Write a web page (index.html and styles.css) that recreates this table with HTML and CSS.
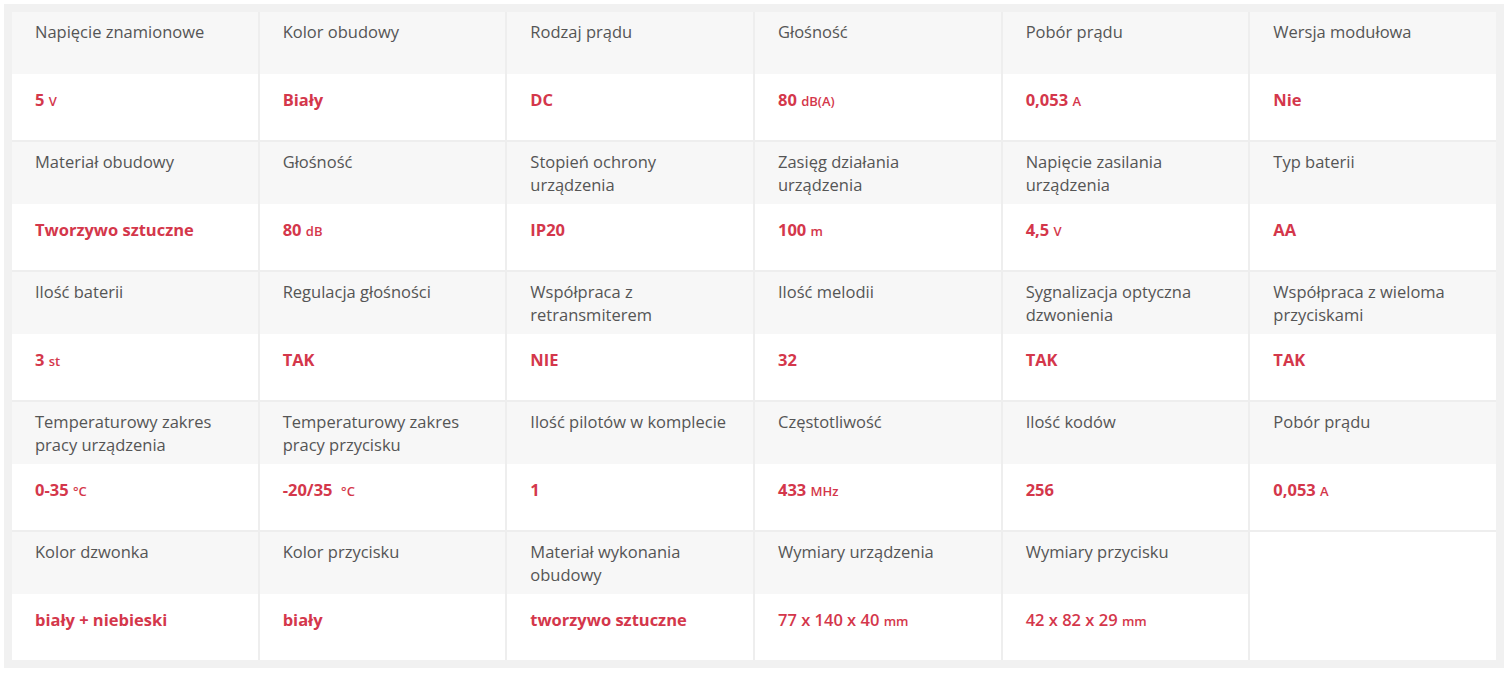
FILE: index.html
```html
<!DOCTYPE html>
<html lang="pl">
<head>
<meta charset="utf-8">
<title>Parametry</title>
<link rel="stylesheet" href="styles.css">
</head>
<body>
<div class="frame">
  <div class="grid">
    <div class="cell"><div class="label">Napięcie znamionowe</div><div class="value">5 <span class="unit">V</span></div></div>
    <div class="cell"><div class="label">Kolor obudowy</div><div class="value">Biały</div></div>
    <div class="cell"><div class="label">Rodzaj prądu</div><div class="value">DC</div></div>
    <div class="cell"><div class="label">Głośność</div><div class="value">80 <span class="unit">dB(A)</span></div></div>
    <div class="cell"><div class="label">Pobór prądu</div><div class="value">0,053 <span class="unit">A</span></div></div>
    <div class="cell"><div class="label">Wersja modułowa</div><div class="value">Nie</div></div>

    <div class="cell"><div class="label">Materiał obudowy</div><div class="value">Tworzywo sztuczne</div></div>
    <div class="cell"><div class="label">Głośność</div><div class="value">80 <span class="unit">dB</span></div></div>
    <div class="cell"><div class="label">Stopień ochrony urządzenia</div><div class="value">IP20</div></div>
    <div class="cell"><div class="label">Zasięg działania urządzenia</div><div class="value">100 <span class="unit">m</span></div></div>
    <div class="cell"><div class="label">Napięcie zasilania urządzenia</div><div class="value">4,5 <span class="unit">V</span></div></div>
    <div class="cell"><div class="label">Typ baterii</div><div class="value">AA</div></div>

    <div class="cell"><div class="label">Ilość baterii</div><div class="value">3 <span class="unit">st</span></div></div>
    <div class="cell"><div class="label">Regulacja głośności</div><div class="value">TAK</div></div>
    <div class="cell"><div class="label">Współpraca z retransmiterem</div><div class="value">NIE</div></div>
    <div class="cell"><div class="label">Ilość melodii</div><div class="value">32</div></div>
    <div class="cell"><div class="label">Sygnalizacja optyczna dzwonienia</div><div class="value">TAK</div></div>
    <div class="cell"><div class="label">Współpraca z wieloma przyciskami</div><div class="value">TAK</div></div>

    <div class="cell"><div class="label">Temperaturowy zakres pracy urządzenia</div><div class="value">0-35 <span class="unit">°C</span></div></div>
    <div class="cell"><div class="label">Temperaturowy zakres pracy przycisku</div><div class="value">-20/35 &nbsp;<span class="unit">°C</span></div></div>
    <div class="cell"><div class="label">Ilość pilotów w komplecie</div><div class="value">1</div></div>
    <div class="cell"><div class="label">Częstotliwość</div><div class="value">433 <span class="unit">MHz</span></div></div>
    <div class="cell"><div class="label">Ilość kodów</div><div class="value">256</div></div>
    <div class="cell"><div class="label">Pobór prądu</div><div class="value">0,053 <span class="unit">A</span></div></div>

    <div class="cell"><div class="label">Kolor dzwonka</div><div class="value">biały + niebieski</div></div>
    <div class="cell"><div class="label">Kolor przycisku</div><div class="value">biały</div></div>
    <div class="cell"><div class="label">Materiał wykonania obudowy</div><div class="value">tworzywo sztuczne</div></div>
    <div class="cell"><div class="label">Wymiary urządzenia</div><div class="value value-light">77 x 140 x 40 <span class="unit">mm</span></div></div>
    <div class="cell"><div class="label">Wymiary przycisku</div><div class="value value-light">42 x 82 x 29 <span class="unit">mm</span></div></div>
    <div class="cell cell-empty"></div>
  </div>
</div>
</body>
</html>
```

FILE: styles.css
```css
* { box-sizing: border-box; }

body {
  margin: 4px;
  background: #ffffff;
  font-family: "Open Sans", "Liberation Sans", sans-serif;
}

.frame {
  width: 1500px;
  border: 8px solid #f1f1f1;
  background: #ffffff;
}

.grid {
  display: grid;
  grid-template-columns: repeat(6, 1fr);
  grid-auto-rows: 128px;
  gap: 2px;
  background: #eeeeee;
}

.cell {
  display: flex;
  flex-direction: column;
  background: #ffffff;
}

.label {
  height: 62px;
  flex: none;
  background: #f7f7f7;
  padding: 8px 18px 0 23px;
  font-size: 16.5px;
  line-height: 23px;
  color: #555555;
  font-weight: 400;
}

.value {
  flex: 1;
  padding: 15px 20px 0 23px;
  font-size: 16.5px;
  line-height: 22px;
  font-weight: 700;
  color: #d4374b;
}

.value-light {
  font-weight: 600;
}

.unit {
  font-size: 13px;
  font-weight: 600;
}

.cell-empty {
  background: #ffffff;
}
```
